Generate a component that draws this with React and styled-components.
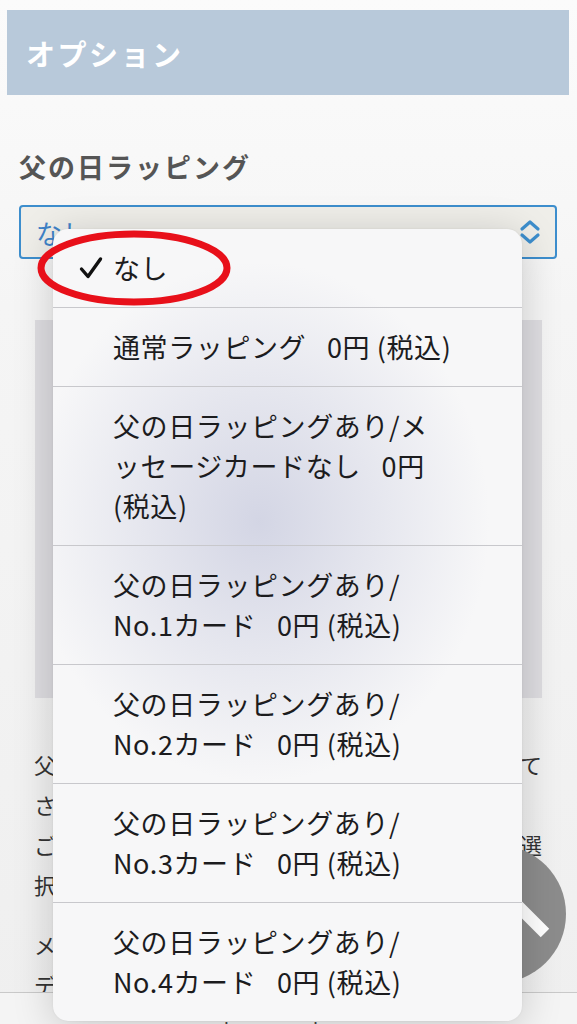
import React from 'react';
import styled, {createGlobalStyle} from 'styled-components';

const GlobalStyle = createGlobalStyle`
  * {
    box-sizing: border-box;
  }

  body {
    margin: 0;
    background: #f3f3f3;
    font-family: "Noto Sans CJK JP", "Noto Sans", sans-serif;
  }
`;

const Page = styled.div`
  position: relative;
  display: flex;
  flex-direction: column;
  width: 577px;
  height: 1024px;
  overflow: hidden;
  background: linear-gradient(#fbfbfb 0%, #f5f5f5 30%, #efefef 100%);
`;

const Content = styled.div`
  display: flex;
  flex-direction: column;
  flex-shrink: 0;
  height: 992px;
  padding-top: 10px;

  & > * {
    flex-shrink: 0;
  }
`;

// 見出し
const Header = styled.div`
  display: flex;
  align-items: center;
  height: 85px;
  margin: 0 8px 0 7px;
  padding-left: 19px;
  background: #b8c9da;
`;

const HeaderTitle = styled.h1`
  margin: 0;
  color: #ffffff;
  font-size: 29px;
  font-weight: 700;
  letter-spacing: 2.5px;
`;

const Section = styled.div`
  display: flex;
  flex-direction: column;
  padding: 0 20px 0 19px;
`;

const Label = styled.div`
  margin-top: 50px;
  line-height: 44px;
  color: #555555;
  font-size: 27px;
  font-weight: 700;
  letter-spacing: 2px;
`;

const SelectWrap = styled.div`
  position: relative;
  margin-top: 16px;
`;

const SelectBox = styled.div`
  display: flex;
  align-items: center;
  justify-content: space-between;
  height: 54px;
  padding: 0 14px 0 15px;
  border: 2px solid #3d8ecd;
  border-radius: 4px;
  background: #efeee9;
`;

const SelectValue = styled.span`
  color: #3f83c8;
  font-size: 26px;
`;

// ドロップダウン
const Menu = styled.div`
  position: absolute;
  top: 24px;
  left: 34px;
  width: 469px;
  display: flex;
  flex-direction: column;
  border-radius: 15px;
  overflow: hidden;
  background:
    radial-gradient(ellipse 230px 260px at 44% 37%, rgba(196, 199, 220, 0.7), rgba(230, 231, 240, 0) 100%),
    #f7f7f8;
  box-shadow: 0 6px 40px rgba(0, 0, 0, 0.18), 0 0 2px rgba(0, 0, 0, 0.08);
  z-index: 3;
`;

const MenuItem = styled.div`
  display: flex;
  align-items: flex-start;
  padding: 19px 20px 19px 26px;
  border-top: ${({$first}) => ($first ? 'none' : '1px solid #c8c8cc')};
  color: #1c1c1e;
  font-size: 27px;
  line-height: 40px;
  letter-spacing: 0.6px;
`;

const CheckSlot = styled.span`
  display: flex;
  align-items: center;
  justify-content: flex-start;
  width: 34px;
  height: 40px;
  flex-shrink: 0;
`;

const ItemText = styled.div`
  display: flex;
  flex-direction: column;
`;

const ItemLine = styled.span`
  white-space: pre;
`;

const Annotation = styled.svg`
  position: absolute;
  top: 22px;
  left: 17px;
  z-index: 4;
`;

const ImageBox = styled.div`
  height: 378px;
  margin: 61px 15px 0 16px;
  background: #dedde1;
`;

const Paragraph = styled.div`
  display: flex;
  flex-direction: column;
  margin: ${({$gap}) => $gap || '0'};
  padding: 0 35px 0 34px;
  color: #333333;
  font-size: 22px;
  line-height: 40px;
`;

const TextLine = styled.div`
  white-space: nowrap;
  text-align: ${({$full}) => ($full ? 'justify' : 'left')};
  text-align-last: ${({$full}) => ($full ? 'justify' : 'auto')};
`;

const Footer = styled.div`
  position: relative;
  z-index: 1;
  display: flex;
  justify-content: center;
  flex-shrink: 0;
  height: 32px;
  padding-top: 27px;
  border-top: 1px solid #c9c9c9;
  background: #f4f4f4;
  color: #444444;
  font-family: "Liberation Sans", sans-serif;
  font-size: 20px;
  line-height: 20px;
`;

const TopButton = styled.div`
  position: absolute;
  left: 428px;
  top: 845px;
  width: 138px;
  height: 138px;
  border-radius: 50%;
  background: #8c8c8c;
  display: flex;
  align-items: center;
  justify-content: center;
  z-index: 2;
`;

const CheckIcon = () => (
  <svg width="24" height="24" viewBox="0 0 24 24">
    <path d="M2.5 13 L9 20.5 L21.5 3" fill="none" stroke="#111" strokeWidth="3.4" strokeLinecap="round" strokeLinejoin="round" />
  </svg>
);

const UpDownIcon = () => (
  <svg width="22" height="26" viewBox="0 0 22 26">
    <path d="M3 10 L11 3 L19 10 M3 16 L11 23 L19 16" fill="none" stroke="#3d8ecd" strokeWidth="3.2" strokeLinecap="round" strokeLinejoin="round" />
  </svg>
);

const options = [
  {id: 0, lines: ['なし'], checked: true},
  {id: 1, lines: ['通常ラッピング\u2002 0円 (税込)']},
  {id: 2, lines: ['父の日ラッピングあり/メ', 'ッセージカードなし\u2002 0円', '(税込)']},
  {id: 3, lines: ['父の日ラッピングあり/', 'No.1カード\u2002 0円 (税込)']},
  {id: 4, lines: ['父の日ラッピングあり/', 'No.2カード\u2002 0円 (税込)']},
  {id: 5, lines: ['父の日ラッピングあり/', 'No.3カード\u2002 0円 (税込)']},
  {id: 6, lines: ['父の日ラッピングあり/', 'No.4カード\u2002 0円 (税込)']},
];

const App = () => {
  return (
    <>
      <GlobalStyle />
      <Page>
        <Content>
          <Header>
            <HeaderTitle>オプション</HeaderTitle>
          </Header>
          <Section>
            <Label>父の日ラッピング</Label>
            <SelectWrap>
              <SelectBox>
                <SelectValue>なし</SelectValue>
                <UpDownIcon />
              </SelectBox>
              <Menu role="listbox">
                {options.map((option, index) => (
                  <MenuItem key={option.id} $first={index === 0} role="option">
                    <CheckSlot>{option.checked && <CheckIcon />}</CheckSlot>
                    <ItemText>
                      {option.lines.map(line => (
                        <ItemLine key={line}>{line}</ItemLine>
                      ))}
                    </ItemText>
                  </MenuItem>
                ))}
              </Menu>
              <Annotation width="200" height="80" viewBox="0 0 200 80">
                <ellipse cx="98" cy="41" rx="93" ry="34" fill="none" stroke="#e8101a" strokeWidth="7" />
              </Annotation>
            </SelectWrap>
            <ImageBox />
          </Section>
          <Paragraph $gap="46px 0 0 0">
            <TextLine $full>父の日ラッピングをご希望の方は、こちらにて</TextLine>
            <TextLine>さらにメッセージカードもお付けできます。</TextLine>
            <TextLine $full>ご注文時に通常ラッピングか父の日ラッピングを選</TextLine>
            <TextLine>択してください。</TextLine>
          </Paragraph>
          <Paragraph $gap="20px 0 0 0">
            <TextLine $full>メッセージカードのデザインは画像をご覧ください</TextLine>
            <TextLine>デザインは4種類からお選びいただけます。</TextLine>
          </Paragraph>
        </Content>
        <Footer>▪ ordemaren-shop.com</Footer>
        <TopButton>
          <svg width="138" height="138" viewBox="0 0 138 138">
            <path d="M21 88 L69 40 L117 88" fill="none" stroke="#ffffff" strokeWidth="12" />
          </svg>
        </TopButton>
      </Page>
    </>
  );
};

export default App;
